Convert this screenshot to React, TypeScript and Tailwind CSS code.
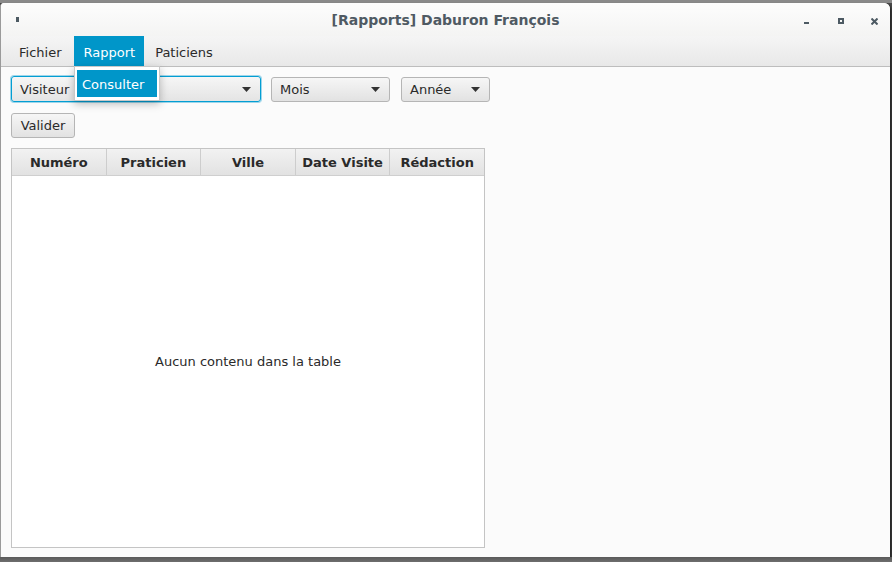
import React from "react";

const Arrow = () => (
  <svg width="9" height="5" viewBox="0 0 9 5" className="shrink-0">
    <path d="M0 0 L9 0 L4.5 5 Z" fill="#333" />
  </svg>
);

export default function App() {
  const cols = ["Numéro", "Praticien", "Ville", "Date Visite", "Rédaction"];
  return (
    <div
      className="w-[892px] h-[562px] bg-[#4a4a4a] relative overflow-hidden flex flex-col"
      style={{ fontFamily: '"DejaVu Sans", "Liberation Sans", sans-serif' }}
    >
      {/* desktop top strip */}
      <div className="h-[3px] bg-[#8a8a8a] shrink-0" />
      {/* window */}
      <div className="w-[890px] h-[554px] flex flex-col bg-[#fbfbfb] border-l border-[#9a9a9a] rounded-tr-[6px] rounded-tl-[4px] shadow-[2px_2px_3px_rgba(0,0,0,0.5)] overflow-hidden">
        {/* title bar */}
        <div className="h-[33px] shrink-0 bg-gradient-to-b from-[#fdfdfd] to-[#f4f4f3] flex items-center relative">
          <div className="absolute left-[15px] top-[14px] w-[3px] h-[5px] bg-[#4d5a63]" />
          <div className="flex-1 text-center text-[14px] font-bold text-[#4f5a63] pt-[1px]">
            [Rapports] Daburon François
          </div>
          <div className="absolute left-[803px] top-[19px] w-[5px] h-[2px] bg-[#4d5a63]" />
          <div className="absolute left-[837px] top-[15px] w-[6px] h-[6px] border-2 border-[#4d5a63]" />
          <svg className="absolute left-[870px] top-[15px]" width="7" height="7" viewBox="0 0 7 7">
            <path d="M0.5 0.5 L6.5 6.5 M6.5 0.5 L0.5 6.5" stroke="#4d5a63" strokeWidth="2" />
          </svg>
        </div>
        {/* menu bar */}
        <div className="h-[31px] shrink-0 bg-gradient-to-b from-[#f5f5f5] to-[#e8e8e8] border-b border-[#bdbdbd] flex items-stretch text-[13px] text-[#2a2a2a] pl-[7px] relative z-10">
          <div className="pl-[11px] pr-[12px] pt-[3px] flex items-center">Fichier</div>
          <div className="pl-[10px] pr-[9px] pt-[3px] flex items-center bg-[#0096c9] text-white">Rapport</div>
          <div className="px-[11px] pt-[3px] flex items-center">Paticiens</div>
          {/* popup */}
          <div className="absolute left-[73px] top-[30px] w-[86px] h-[35px] bg-white border border-[#c8c8c8] shadow-[0_3px_8px_rgba(0,0,0,0.25)] pt-[3px] px-[2px]">
            <div className="h-[27px] bg-[#0096c9] text-white flex items-center pl-[5px] pt-[2px] text-[13px]">Consulter</div>
          </div>
        </div>
        {/* content */}
        <div className="flex-1 flex flex-col pl-[10px] pt-[9px] pb-[9px]">
          <div className="flex items-center">
            <div className="w-[250px] h-[26px] rounded-[3px] border border-[#039ed3] shadow-[0_0_0_1px_#9fd6ea] bg-gradient-to-b from-[#f6f6f6] to-[#e4e4e4] flex items-center justify-between pl-[8px] pr-[9px] text-[13px] text-[#2a2a2a]">
              <span className="pt-[2px]">Visiteur</span>
              <Arrow />
            </div>
            <div className="ml-[10px] w-[119px] h-[25px] rounded-[3px] border border-[#b5b5b5] bg-gradient-to-b from-[#f6f6f6] to-[#e2e2e2] flex items-center justify-between pl-[8px] pr-[9px] text-[13px] text-[#2a2a2a]">
              <span className="pt-[2px]">Mois</span>
              <Arrow />
            </div>
            <div className="ml-[11px] w-[89px] h-[25px] rounded-[3px] border border-[#b5b5b5] bg-gradient-to-b from-[#f6f6f6] to-[#e2e2e2] flex items-center justify-between pl-[8px] pr-[9px] text-[13px] text-[#2a2a2a]">
              <span className="pt-[2px]">Année</span>
              <Arrow />
            </div>
          </div>
          <div className="mt-[11px]">
            <div className="w-[64px] h-[25px] rounded-[3px] border border-[#b5b5b5] bg-gradient-to-b from-[#f6f6f6] to-[#e2e2e2] flex items-center justify-center text-[13px] text-[#2a2a2a]">
              Valider
            </div>
          </div>
          <div className="mt-[10px] w-[474px] flex-1 border border-[#c4c4c4] bg-white flex flex-col">
            <div className="h-[27px] shrink-0 flex bg-gradient-to-b from-[#f2f2f2] to-[#e2e2e2] border-b border-[#cfcfcf]">
              {cols.map((c, i) => (
                <div
                  key={c}
                  className={`flex-1 flex items-center justify-center pt-[2px] text-[13px] font-bold text-[#2a2a2a] ${i < 4 ? "border-r border-[#cdcdcd]" : ""}`}
                >
                  {c}
                </div>
              ))}
            </div>
            <div className="flex-1 flex items-center justify-center text-[13px] text-[#2a2a2a] pt-[1px]">
              Aucun contenu dans la table
            </div>
          </div>
        </div>
      </div>
      {/* taskbar */}
      <div className="flex-1 bg-gradient-to-b from-[#5a5a5a] to-[#6e6e6e]" />
    </div>
  );
}
